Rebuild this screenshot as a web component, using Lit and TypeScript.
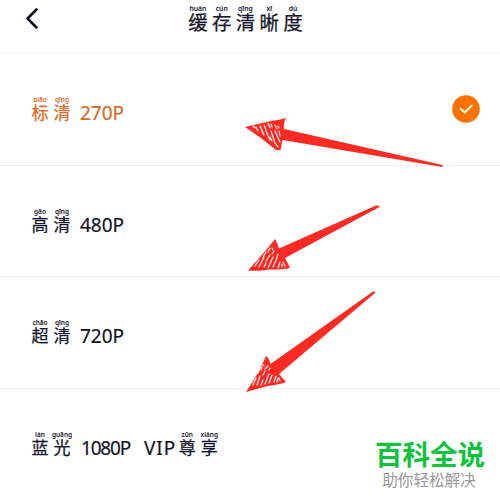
import { LitElement, html, css, svg } from "lit";
import { customElement, property } from "lit/decorators.js";
import { classMap } from "lit/directives/class-map.js";

type Syllable = [string, string];

interface Quality {
  name: Syllable[];
  value: string;
  suffix?: string;
  extra?: Syllable[];
  selected?: boolean;
}

const TITLE: Syllable[] = [["缓", "huǎn"], ["存", "cún"], ["清", "qīng"], ["晰", "xī"], ["度", "dù"]];

const QUALITIES: Quality[] = [
  { name: [["标", "biāo"], ["清", "qīng"]], value: "270P", selected: true },
  { name: [["高", "gāo"], ["清", "qīng"]], value: "480P" },
  { name: [["超", "chāo"], ["清", "qīng"]], value: "720P" },
  { name: [["蓝", "lán"], ["光", "guāng"]], value: "1080P", suffix: "VIP", extra: [["尊", "zūn"], ["享", "xiǎng"]] },
];

@customElement("pinyin-text")
export class PinyinText extends LitElement {
  @property({ attribute: false }) text: Syllable[] = [];

  static styles = css`
    :host { display: flex; }
    .cell {
      width: var(--cell, 22px);
      display: flex;
      flex-direction: column;
      align-items: center;
    }
    .reading {
      font: 600 var(--reading, 6.5px)/7px "Noto Sans", sans-serif;
      white-space: nowrap;
    }
    .glyph {
      font: 400 var(--glyph, 17px)/var(--line, 18px) "Noto Sans CJK SC", sans-serif;
      -webkit-text-stroke: 0.25px currentColor;
    }
  `;

  render() {
    return this.text.map(([glyph, reading]) => html`
      <span class="cell"><span class="reading">${reading}</span><span class="glyph">${glyph}</span></span>`);
  }
}

@customElement("quality-row")
export class QualityRow extends LitElement {
  @property({ attribute: false }) item!: Quality;

  static styles = css`
    :host { display: block; }
    .row {
      box-sizing: border-box;
      height: 100%;
      padding: 0 20px 0 29px;
      display: flex;
      align-items: center;
      border-bottom: 1px solid #efefef;
      color: #14142a;
    }
    :host(:last-of-type) .row { border-bottom-color: transparent; }
    .row.selected { color: #d9692b; }
    .label { display: flex; align-items: flex-end; margin-top: -2px; }
    .value {
      font: 400 19px/20px "Noto Sans", sans-serif;
      margin-left: 7px;
      margin-bottom: -2px;
      -webkit-text-stroke: 0.2px currentColor;
    }
    .tight { letter-spacing: -1.2px; margin-left: 8px; }
    .suffix { letter-spacing: 1px; margin-left: 14px; margin-right: 0; }
    .check { margin-left: auto; width: 28px; height: 28px; }
  `;

  render() {
    const { name, value, suffix, extra, selected } = this.item;
    return html`
      <div class=${classMap({ row: true, selected: !!selected })}>
        <div class="label">
          <pinyin-text .text=${name}></pinyin-text>
          <span class=${classMap({ value: true, tight: value.length > 4 })}>${value}</span>
          ${suffix ? html`<span class="value suffix">${suffix}</span>` : null}
          ${extra ? html`<pinyin-text .text=${extra}></pinyin-text>` : null}
        </div>
        ${selected ? html`
          <svg class="check" viewBox="0 0 28 28">
            <circle cx="14" cy="14" r="13.8" fill="#fb7204" />
            <path d="M8.6 13.7 12.7 17.6 19.6 10.8" fill="none" stroke="#fff5dc" stroke-width="2.1" stroke-linecap="round" stroke-linejoin="round" />
          </svg>` : null}
      </div>`;
  }
}

const ARROWS = [
  {
    body: "M245 127 L271 121 Q280 120 286 118 Q283 124 284 129 L442.5 165 L442.5 167 L282.5 140 L280.5 150 L276 150 Q262 138 245 127Z",
    hatch: "M253 126l2 2M256 127l2 4M260 126l4 9M264 125l2 5M268 123l2 5M266 131l4 9M271 124l1 3M271 131l4 12M275 125l2 4M275 131l5 11M278 126l1 2M279 131l1 5M275 143l3 4M270 137l2 4M262 132l2 3",
  },
  {
    body: "M248 270.5 Q265 252 275 239 Q277 242 279 248.5 L376 205.5 Q380 205 379.5 207 L285 258 L290 267.5 Q286 270 270 269.5 Q258 271.5 248 270.5Z",
    hatch: "M255 266l4-6M259 267l5-10M264 267l2-4M263 257l3-5M268 252l2-4M266 261l4-6M268 268l5-11M273 267l4-9M272 254l2-3M278 268l2-6M277 257l1-3M282 267l0-3M285 266l-2-4M272 248l1 2",
  },
  {
    body: "M246 392 Q259 373 266 356 Q269 358 270.5 364 L373 291.5 Q376 291 375 293 L279 374 L286 382 Q282 384 268 386 Q256 389 246 392Z",
    hatch: "M253 385l3-7M257 385l3-9M261 385l2-5M258 373l2-5M261 370l1-3M263 375l2-4M265 384l4-10M269 383l3-8M265 369l3-3M269 370l1-2M274 382l2-6M277 382l1-4M280 381l-1-3M263 365l1 1",
  },
];

@customElement("app-root")
export class AppRoot extends LitElement {
  static styles = css`
    :host {
      display: block;
      position: relative;
      width: 500px;
      height: 500px;
      overflow: hidden;
      background: #fefefe;
    }
    .screen { height: 100%; display: grid; grid-template-rows: 53px 113px 111px 112px 111px; }
    header {
      display: grid;
      grid-template-columns: 60px 1fr 60px;
      border-bottom: 1px solid #f5f5f5;
      color: #14142a;
    }
    .back { width: 16px; height: 24px; margin: 6px 0 0 24px; }
    .title {
      --cell: 23.8px;
      --glyph: 19.5px;
      --line: 19px;
      --reading: 6.8px;
      justify-content: center;
      margin: 5px 0 0 -9px;
    }
    .arrows { position: absolute; inset: 0; width: 500px; height: 500px; pointer-events: none; }
    .brand {
      position: absolute;
      right: 15px;
      bottom: 11px;
      display: flex;
      flex-direction: column;
      align-items: center;
      font-family: "Noto Sans CJK SC", sans-serif;
      white-space: nowrap;
    }
    .name { color: #0fc43d; font-size: 27.5px; font-weight: 700; line-height: 31px; }
    .slogan { color: #999; font-size: 15.6px; line-height: 20px; margin-right: 2px; }
  `;

  render() {
    return html`
      <div class="screen">
        <header>
          <svg class="back" viewBox="0 0 16 24">
            <path d="M12.5 3.5 3.5 12.5 12.5 21.5" fill="none" stroke="#0c0c20" stroke-width="2.6" stroke-linecap="round" stroke-linejoin="round" />
          </svg>
          <pinyin-text class="title" .text=${TITLE}></pinyin-text>
        </header>
        ${QUALITIES.map((q) => html`<quality-row .item=${q}></quality-row>`)}
      </div>
      <svg class="arrows" viewBox="0 0 500 500">
        ${ARROWS.map((a) => svg`
          <path d=${a.body} fill="#fb2a22" />
          <path d=${a.hatch} fill="none" stroke="#fff" stroke-width="1.1" stroke-linecap="round" />`)}
      </svg>
      <div class="brand">
        <span class="name">百科全说</span>
        <span class="slogan">助你轻松解决</span>
      </div>`;
  }
}
